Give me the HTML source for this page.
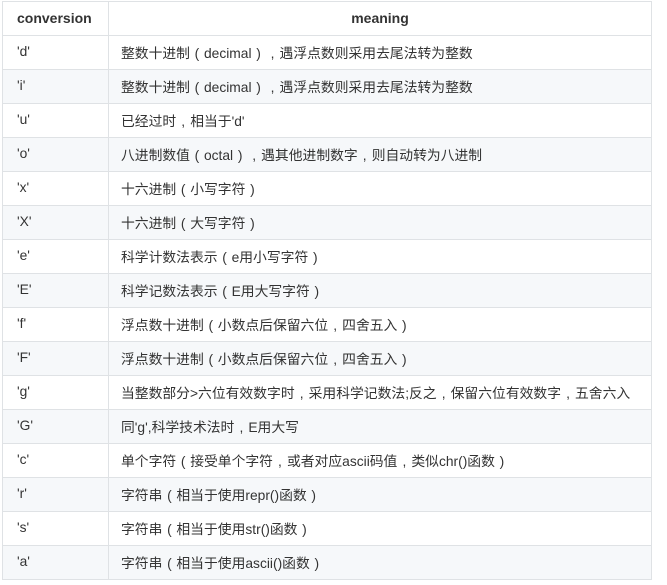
<!DOCTYPE html>
<html><head><meta charset="utf-8"><style>
body{margin:0;background:#fff;}
table{position:absolute;left:2px;top:1px;border-collapse:collapse;width:650px;font-family:"Liberation Sans","Noto Sans CJK SC",sans-serif;font-size:13.8px;color:#333;}
td,th{border:1px solid #dfe2e5;height:34px;box-sizing:border-box;padding:0 0 2px 12px;text-align:left;white-space:nowrap;}
th{font-weight:bold;font-size:14px;}
th.c{text-align:center;padding:0 0 2px 0;}
tr:nth-child(odd) td{background:#f6f8fa;}
tr:first-child td{background:#fff}
td:first-child,th:first-child{width:106px;padding-left:14px;}
i{font-style:normal;display:inline-block;width:14px;text-align:center;}
</style></head><body>
<table>
<tr><th>conversion</th><th class="c">meaning</th></tr>
<tr><td>'d'</td><td>整数十进制<i>(</i>decimal<i>)</i><i>,</i>遇浮点数则采用去尾法转为整数</td></tr>
<tr><td>'i'</td><td>整数十进制<i>(</i>decimal<i>)</i><i>,</i>遇浮点数则采用去尾法转为整数</td></tr>
<tr><td>'u'</td><td>已经过时<i>,</i>相当于'd'</td></tr>
<tr><td>'o'</td><td>八进制数值<i>(</i>octal<i>)</i><i>,</i>遇其他进制数字<i>,</i>则自动转为八进制</td></tr>
<tr><td>'x'</td><td>十六进制<i>(</i>小写字符<i>)</i></td></tr>
<tr><td>'X'</td><td>十六进制<i>(</i>大写字符<i>)</i></td></tr>
<tr><td>'e'</td><td>科学计数法表示<i>(</i>e用小写字符<i>)</i></td></tr>
<tr><td>'E'</td><td>科学记数法表示<i>(</i>E用大写字符<i>)</i></td></tr>
<tr><td>'f'</td><td>浮点数十进制<i>(</i>小数点后保留六位<i>,</i>四舍五入<i>)</i></td></tr>
<tr><td>'F'</td><td>浮点数十进制<i>(</i>小数点后保留六位<i>,</i>四舍五入<i>)</i></td></tr>
<tr><td>'g'</td><td>当整数部分&gt;六位有效数字时<i>,</i>采用科学记数法;反之<i>,</i>保留六位有效数字<i>,</i>五舍六入</td></tr>
<tr><td>'G'</td><td>同'g',科学技术法时<i>,</i>E用大写</td></tr>
<tr><td>'c'</td><td>单个字符<i>(</i>接受单个字符<i>,</i>或者对应ascii码值<i>,</i>类似chr()函数<i>)</i></td></tr>
<tr><td>'r'</td><td>字符串<i>(</i>相当于使用repr()函数<i>)</i></td></tr>
<tr><td>'s'</td><td>字符串<i>(</i>相当于使用str()函数<i>)</i></td></tr>
<tr><td>'a'</td><td>字符串<i>(</i>相当于使用ascii()函数<i>)</i></td></tr>
</table>
</body></html>
